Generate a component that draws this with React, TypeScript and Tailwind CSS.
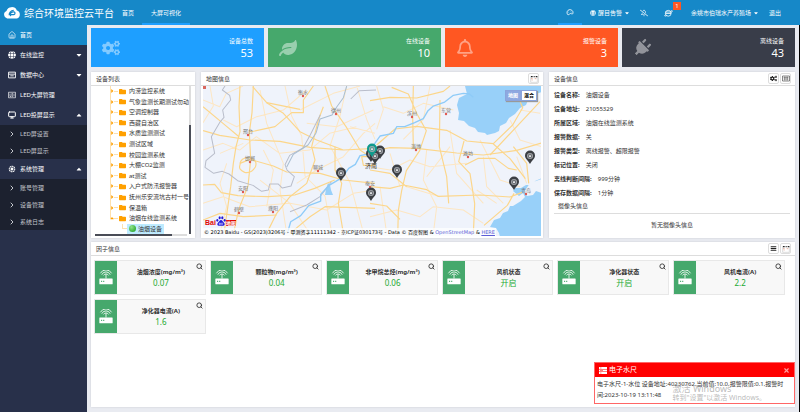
import type { ReactNode } from 'react'
import clsx from 'clsx'
import { FaCaretDown, FaCaretUp, FaCogs, FaFolder, FaGlobe, FaLeaf, FaPlug, FaRegBell, FaRegBellSlash } from 'react-icons/fa'
import { IoAperture } from 'react-icons/io5'
import { LuChevronRight, LuHouse, LuMenu, LuMonitor, LuSearch, LuX } from 'react-icons/lu'

type NavItem = { label: string; icon: ReactNode; active?: boolean; open?: boolean; menu?: boolean; children?: string[] }

const NAV: NavItem[] = [
  { label: '首页', icon: <LuHouse />, active: true },
  { label: '在线监控', icon: <FaGlobe />, menu: true },
  { label: '数据中心', icon: <WindowIcon />, menu: true },
  { label: 'LED大屏管理', icon: <PanelIcon /> },
  { label: 'LED投屏显示', icon: <LuMonitor strokeWidth={3} />, menu: true, open: true, children: ['LED屏设置', 'LED屏显示'] },
  { label: '系统管理', icon: <IoAperture />, menu: true, open: true, children: ['账号管理', '设备管理', '系统日志'] },
]

const STATS = [
  { label: '设备总数', value: 53, color: 'bg-[#1e9fff]', icon: <FaCogs /> },
  { label: '在线设备', value: 10, color: 'bg-[#46a86c]', icon: <FaLeaf /> },
  { label: '报警设备', value: 3, color: 'bg-[#ff5722]', icon: <FaRegBell /> },
  { label: '离线设备', value: 43, color: 'bg-[#393d49]', icon: <FaPlug className="rotate-45" /> },
]

const TREE = [
  '内涝监控系统', '气象监测长期测试勿动', '空调控制器', '西藏自治区', '水质监测测试', '测试区域', '校园监测系统',
  '大棚CO2监测', 'at测试', '入户式防汛报警器', '抚州乐安流坑古村一号', '保温箱', '油烟在线监测系统',
]

const INFO: [string, string][] = [
  ['设备名称', '油烟设备'],
  ['设备地址', '21055329'],
  ['所属区域', '油烟在线监测系统'],
  ['报警数据', '关'],
  ['报警类型', '离线报警、超限报警'],
  ['标记位置', '关闭'],
  ['离线判断间隔', '999分钟'],
  ['保存数据间隔', '1分钟'],
]

const FACTORS: [string, string][] = [
  ['油烟浓度(mg/m³)', '0.07'],
  ['颗粒物(mg/m³)', '0.04'],
  ['非甲烷总烃(mg/m³)', '0.06'],
  ['风机状态', '开启'],
  ['净化器状态', '开启'],
  ['风机电流(A)', '2.2'],
  ['净化器电流(A)', '1.6'],
]

// name, dot x, dot y
const CITIES: [string, number, number][] = [
  ['衡水', 100, 10], ['德州', 133, 28], ['邢台', 45, 49], ['邯郸', 47, 76], ['安阳', 40, 106], ['鹤壁', 36, 127],
  ['濮阳', 70, 126], ['聊城', 115, 85], ['泰安', 167, 101], ['滨州', 209, 31], ['东营', 243, 28], ['淄博', 213, 64],
  ['潍坊', 265, 71], ['青岛', 323, 108],
]

const PINS = [[168, 76], [177, 73], [172, 78], [138, 95], [168, 115], [194, 92], [327, 78], [311, 104]]

function WindowIcon() {
  return (
    <svg viewBox="0 0 14 14" width="1em" height="1em" fill="none" stroke="currentColor" strokeWidth="1.6">
      <path d="M1 2h12v10H1zM1 5.5h12M4 8.5h6" />
    </svg>
  )
}

function PanelIcon() {
  return (
    <svg viewBox="0 0 16 14" width="1em" height="1em" fill="none" stroke="currentColor" strokeWidth="1.3">
      <path d="M1 1.5h14v11H1zM4 4v6h2M8 4v6M7.5 4h2M7.5 7h2M7.5 10h2M12 4v6" />
    </svg>
  )
}

function GridIcon() {
  return (
    <svg viewBox="0 0 16 14" width="8" height="7" fill="none" stroke="#555">
      <path d="M1 2h14v10H1z" strokeWidth="1.4" />
      <path d="M3 5h10M3 8h10M5 3v8M8 3v8M11 3v8" strokeWidth="1" />
    </svg>
  )
}

function LayoutIcon() {
  return (
    <svg viewBox="0 0 24 24" width="8" height="8" fill="none">
      <path d="M2 3v19h20V3" stroke="#bbb" strokeWidth="1.5" />
      <path d="M3 5h5M11 5h3M17 5h5" stroke="#222" strokeWidth="4" />
      <path d="M3 11h5M5 15h3M14 11h5" stroke="#d98f7a" strokeWidth="2" />
    </svg>
  )
}

function GaugeIcon() {
  return (
    <svg viewBox="0 0 24 20" width="8" height="7" fill="none" stroke="currentColor" strokeWidth="2.500">
      <path d="M5 16a9 9 0 1 1 16-5c0 3-2 4-4 3s-5-2-6 0-3 3-6 2z" />
      <path d="M8 9h1M13 6h1M17 9h1" />
    </svg>
  )
}

function BrowserIcon() {
  return (
    <svg viewBox="0 0 18 16" width="9" height="8" fill="none" stroke="currentColor" strokeWidth="1.6">
      <circle cx="8.500" cy="8.500" r="5.800" />
      <path d="M3 9h11M3 6h11M14 4c4-2 3 1 0 3.500M3.500 11C0 14 1 15 5 13.500" />
    </svg>
  )
}

function CloudLogo() {
  return (
    <svg viewBox="0 0 52 36" width="18" height="13">
      <path d="M12 35a11 11 0 0 1-2-21A16 16 0 0 1 40 12a12 12 0 0 1 0 23z" fill="#fff" />
      <path d="M20 24h11c5 0 5-9-2-8-8 1-10 9-6 12M31 12c-9 0-14 8-13 14" fill="none" stroke="#1688c8" strokeWidth="3.500" />
    </svg>
  )
}

function RouterIcon() {
  return (
    <svg viewBox="0 0 40 42" width="14" height="15" fill="none" stroke="#fff" strokeWidth="2.400">
      <path d="M20 12v12M13 15a8 8 0 0 1 14 0M8 13a13 13 0 0 1 24 0M4 9a18 18 0 0 1 32 0" />
      <rect x="1" y="24" width="38" height="16" rx="1.500" fill="#fff" stroke="none" />
      <path d="M6 32h3M12 32h3" stroke="#46a86c" strokeWidth="3" />
    </svg>
  )
}

function Pin({ x, y, color = '#3c3f44' }: { x: number; y: number; color?: string }) {
  return (
    <g transform={`translate(${x} ${y})`}>
      <path d="M0 0C-2-4-5-5-5-8.500a5 5 0 0 1 10 0C5-5 2-4 0 0z" fill={color} />
      <circle cy="-8" r="3" fill="#a9acb0" />
      <circle cy="-8" r="1.800" fill="none" stroke={color} strokeWidth=".6" />
      <path d="M-1-7.500h2M0-9v2" stroke="#fff" strokeWidth=".5" />
    </g>
  )
}

function MapDrawing() {
  return (
    <svg className="block h-full w-full" aria-label="地图">
      <rect width="100%" height="100%" fill="#eff3fb" />
      {/* sea */}
      <path d="M262 0l2 8-8 4-2 7 2 8-1 7 6 1 5 5 6 2 3 4 7 1 2 2 8-2 4-2 1-5 6-3 3-5 6-4 5-6 6-3 3-7 7-4 8-3h60V0z" fill="#98d0f9" />
      <path d="M420 92H339l-7 3-1 4-8 0-5 3-6 0-2 3 6 5 4-3 2 4-4 4-8 5-3 0-2 5-5 2-3 5-6 2-4 7 6 1 3 5 1 4h130z" fill="#98d0f9" />
      <path d="M327 97l12-4v14l-6-2-3 4-6 1-3-4z" fill="#eff3fb" />
      <path d="M125 97l2 2 1 5 2 5-8 0 1-6z" fill="#98d0f9" />

      {/* west side */}
      <g transform="translate(-3 -16) scale(.3334)" fill="none" strokeLinejoin="round">
        <g stroke="#fde6c2" strokeWidth="3">
          <path d="M9 90l50 20 20-40 50-22M70 150l40 20 60-30 80-20 70-60M30 48l10 60-31 50M9 240l60-20 50 20 50-40 70 50 90-10 60-50 80-20M60 250l70-30M180 60l20 100 50 120-10 80 20 130M255 48l20 90 30 60 10 120 60 60 20 110M60 490l20-80-20-70 20-60M300 120l100-50 80-22M320 160l90 10 110-50M290 340l60-40 80-40 60-70 35-30M180 330l90 70 110 20 80-50 65-10M9 400l60-20 80 30 120-10 60 90M440 48l-20 90-30 90 60 110 40 150M470 48l30 100 25 60M190 240l30 60-20 110M450 170l75 20" />
        </g>
        <g stroke="#fcd68a" strokeWidth="3.500">
          <path d="M120 48l-3 62 3 75-12 45-8 50-8 70-20 140M160 48l-4 80-8 60 4 80-8 80-28 70-15 70" />
          <path d="M9 182l50 14 91 14 90 4 90 18 100 8 95-5M158 50l42 48 50 32 50 55 50 25 80 30" />
          <path d="M120 280l30-12 70 20 40 18 100 4 70 20 95 10M9 345l35-2 20 25 50 9 90 3 80-5 60-20 60-25" />
          <path d="M340 48l-30 42 0 38-35 0-50 42-75 16M375 48l20 60 45 65 40 67 30 20M200 98l100 20M370 110l-15 40-20 80 10 40-25 70-50 40-40 50-30 60" />
          <path d="M405 230v70l20 40-10 60 15 90M270 490l60-50 45-30 150 5M9 450l51-20 70 10 100-5M120 285q0-24 30-22 24 8 16 28-12 20-32 16-20-8-14-22M9 110l60 50 48 40M485 260h40v26h-35z" />
        </g>
        <path d="M75 48l-8 12 22 16 3 14-24 30 4 22-12 14-26 44 10 50-26 22-3 20 26 18 26-6 20 8 26 20 46 14 26 18 20-4 4-18 26 0 12 12 26-6 10-28-22-20-6-16 14-28 40-22 22-40 30-60M528 60l-50 2-26 25M270 425l50-20 40-25 34-45" stroke="#b9bdca" strokeWidth="3" />
        <path d="M440 48l-10 35-20 28-14 24-36 12-12 42-24 36-44 28-20 38" stroke="#a8bed1" strokeWidth="3" />
        <path d="M262 490l10-35 30-18 24-30 36-14 0-20 24-26 40-24 20-28 20-12 14-26 32-6" stroke="#8ecbf8" strokeWidth="4" />
      </g>

      {/* east side */}
      <g transform="translate(167 -16) scale(.3334)" fill="none" strokeLinejoin="round">
        <g stroke="#fde6c2" strokeWidth="3">
          <path d="M20 48l20 70-20 60M40 110l60 20 60-30 90 20M180 48l-20 100-60 60M0 290l60 10 60-30 60 20 110-10M60 250l30 100M170 240l-10 90 40 80-10 80M340 260l10 90 50 50M240 180l20 130 80 90M0 440l80-20 70 20 40-30 90 10 60 40M110 350l100 30M420 150l30 60 65 20M330 210l60 120 60 20M450 120l60 10M440 260l30 80M240 230l-70 90M30 350l20 140M380 400l-60-40" />
        </g>
        <g stroke="#fcd68a" strokeWidth="3.500">
          <path d="M0 92l60-10 80 2 80-20 20-16M130 48l-2 90 2 95M65 52l50 20 26 60 28 50-20 60-40 60-14 60-10 60-2 82" />
          <path d="M0 245l60-12 80 2 120 14 80 6 100-14 75-22M20 225l55-48 65-8 90 12 60 32 80 8 58-56 30-52-12-28" />
          <path d="M210 90l-2 140 22 90 6 80M282 213l-16 62 34 36 14 90-4 90M370 222l50 44 46 60M285 285l40-20 50 0 40 30 25 5" />
          <path d="M0 350l60 5 40-10 70 14 34 20 126-4 90 6 36-14M432 370l-20 36-70 60M360 255l150-160M0 400l50 8 40 40M0 300l60 10 50 40M430 230l40 50 6 60" />
        </g>
        <path d="M0 240l30-42 40-8 10-20 24 0 30-12 26-12 14-24 16-14 34-12 26-20 30-6 18 2 12 10" stroke="#8ecbf8" strokeWidth="4" />
      </g>

      <rect x="0" y="0" width="3" height="3" fill="#d9675f" />
      {CITIES.map(([name, x, y]) => (
        <g key={name}>
          <circle cx={x} cy={y} r="1.200" fill="#e0574f" />
          <text x={x} y={y - 2} textAnchor="middle" className="fill-[#777] text-[5px]">{name}</text>
        </g>
      ))}
      <text x="168" y="82" textAnchor="middle" className="fill-[#333] text-[6px]">济南</text>
      {PINS.map(([x, y]) => <Pin key={`${x}-${y}`} x={x} y={y} />)}
      <Pin x={169} y={71} color="#0f9a8c" />
    </svg>
  )
}

function BaiduLogo() {
  return (
    <div className="flex items-end font-['Liberation_Sans'] text-[7px] leading-[7px] font-bold text-[#e10602]">
      Bai
      <svg viewBox="0 0 30 30" width="10" height="10" fill="#2319dc">
        <ellipse cx="4" cy="13" rx="3" ry="4" />
        <ellipse cx="11" cy="5" rx="3.200" ry="4.500" />
        <ellipse cx="19" cy="5" rx="3.200" ry="4.500" />
        <ellipse cx="26" cy="13" rx="3" ry="4" />
        <path d="M15 12c4 0 5 5 9 8s2 9-3 9H9c-5 0-7-6-3-9s5-8 9-8z" />
        <path d="M10 21h3v5h-3zM16 20v5h4v-5" fill="none" stroke="#fff" strokeWidth="1.500" />
      </svg>
      <span className="bg-[#e10602] font-['Noto_Sans_CJK_SC'] text-[5px] leading-[6px] text-white">地图</span>
    </div>
  )
}

function IconButton({ label, children }: { label: string; children: ReactNode }) {
  return (
    <button aria-label={label} className="flex h-[11px] w-[11px] items-center justify-center rounded-xs border border-[#ddd] bg-white text-[7px] text-[#222]">
      {children}
    </button>
  )
}

function Panel({ title, actions, className, children }: { title: string; actions?: ReactNode; className?: string; children: ReactNode }) {
  return (
    <section className={clsx('flex min-w-0 flex-col bg-white shadow-[0_0_2px_rgba(0,0,0,0.12)]', className)}>
      <header className="flex h-[14px] shrink-0 items-center justify-between border-b border-[#ddd] pr-1 pl-[5px]">
        <h2>{title}</h2>
        <div className="flex gap-px">{actions}</div>
      </header>
      {children}
    </section>
  )
}

function TopBar() {
  return (
    <header className="flex h-[25px] shrink-0 items-center bg-[#1688c8] text-white">
      <div className="flex items-center gap-[3px] pl-[3px]">
        <CloudLogo />
        <h1 className="text-[10px] whitespace-nowrap">综合环境监控云平台</h1>
      </div>
      <nav className="flex h-full">
        <a href="#home" className="flex items-center px-2">首页</a>
        <a href="#screen" className="flex items-center border-b-2 border-[#1e9fff] px-[9px] pt-[2px]">大屏可视化</a>
      </nav>
      <div className="ml-auto flex h-full items-center pr-[19px]">
        <button aria-label="主题" className="flex h-full w-6 items-center justify-center border-b-2 border-[#1e9fff] pt-[2px]"><GaugeIcon /></button>
        <button className="ml-2 flex items-center gap-[2px]"><FaGlobe />醒目告警<FaCaretDown /></button>
        <button aria-label="静音" className="ml-[10px] text-[8px]"><FaRegBellSlash /></button>
        <button aria-label="消息" className="relative ml-4">
          <BrowserIcon />
          <span className="absolute -top-[7px] left-[9px] h-2 w-2 bg-[#ff5722] text-[6px] leading-2">1</span>
        </button>
        <button className="ml-[18px] flex items-center gap-[2px]">余姚市伯瑞水产养殖场<FaCaretDown /></button>
        <a href="#logout" className="ml-[10px]">退出</a>
      </div>
    </header>
  )
}

function Sidebar() {
  return (
    <nav className="w-[87px] shrink-0 bg-[#28304a] text-white">
      {NAV.map(item => (
        <div key={item.label}>
          <a href="#nav" className={clsx('flex h-5 items-center gap-1 pr-1 pl-2', item.active && 'bg-[#1688c8]')}>
            <span className="text-[8px]">{item.icon}</span>
            <span className="flex-1">{item.label}</span>
            {item.menu && (item.open ? <FaCaretUp className="text-[8px]" /> : <FaCaretDown className="text-[8px]" />)}
          </a>
          {item.children && (
            <div className="bg-[#1c212f] text-[#c3c6cc]">
              {item.children.map(c => (
                <a key={c} href="#nav" className="flex h-[17px] items-center gap-1 pl-2">
                  <LuChevronRight className="text-[8px]" strokeWidth={3} />
                  {c}
                </a>
              ))}
            </div>
          )}
        </div>
      ))}
    </nav>
  )
}

function DeviceTree() {
  return (
    <>
      <div className="flex min-h-0 flex-1 pr-1 pl-[19px]">
        <ul className="relative flex min-w-0 flex-1 flex-col justify-between overflow-hidden whitespace-nowrap">
          <li aria-hidden className="absolute top-0 bottom-4 left-0 w-px bg-[#fde0ae]" />
          {TREE.map((name, i) => (
            <li key={name} className="flex h-[10px] items-center">
              {i === TREE.length - 1 ? <FaCaretUp className="w-1 shrink-0 text-[#ffa000]" /> : <FaCaretDown className="w-1 shrink-0 -rotate-90 text-[#ffa000]" />}
              <span className="h-px w-1 shrink-0 bg-[#fde0ae]" />
              <FaFolder className="mr-[3px] ml-px shrink-0 text-[7px] text-[#ffa000]" />
              {name}
            </li>
          ))}
          <li className="flex h-[10px] items-center pl-3">
            <span className="mb-1 h-[5px] w-[5px] border-b border-l border-[#fde0ae]" />
            <span className="flex h-[10px] items-center gap-[2px] bg-[#beebff] px-[2px]">
              <span className="h-[7px] w-[7px] rounded-full bg-radial-[at_35%_30%] from-[#8fe38a] to-[#159a1c]" />
              油烟设备
            </span>
          </li>
        </ul>
        <div className="flex w-[2px] flex-col bg-[#ddd] pt-[39px]">
          <div className="flex-1 bg-[#4a4d57]" />
        </div>
      </div>
      <div className="mr-2 mb-[2px] ml-1 h-[2px] bg-[#ddd]">
        <div className="h-full w-5/6 bg-[#4a4d57]" />
      </div>
    </>
  )
}

function MapPanel() {
  return (
    <Panel title="地图信息" actions={<IconButton label="布局"><LayoutIcon /></IconButton>}>
      <div className="relative mx-[2px] mb-[2px] min-h-0 flex-1 overflow-hidden">
        <MapDrawing />
        <div className="absolute top-1 right-1 flex text-[5px] leading-[9px] font-bold shadow-[1px_1px_1px_#999]">
          <button className="w-4 border border-[#8ba4dc] bg-[#8ea8e0] text-white">地图</button>
          <button className="w-4 border border-[#8ba4dc] bg-white text-black">混合</button>
        </div>
        <div className="absolute bottom-[10px] left-[2px]"><BaiduLogo /></div>
        <p className="absolute bottom-0 left-0 bg-white/70 px-px font-['DejaVu_Sans','Noto_Sans_CJK_SC',sans-serif] text-[5px] leading-2 whitespace-nowrap text-black">
          © 2023 Baidu - GS(2023)3206号 - 甲测资字11111342 - 京ICP证030173号 - Data © 百度智图 &amp;{' '}
          <a href="#osm" className="text-[#5c5cd6]">OpenStreetMap</a> &amp; <a href="#here" className="text-[#5c5cd6] underline">HERE</a>
        </p>
      </div>
    </Panel>
  )
}

function InfoPanel() {
  return (
    <Panel
      title="设备信息"
      actions={<><IconButton label="设置"><FaCogs /></IconButton><IconButton label="表格"><GridIcon /></IconButton></>}
    >
      <dl className="px-[5px] pt-[2px] leading-[14px]">
        {INFO.map(([k, v]) => (
          <div key={k} className="flex gap-[6px]">
            <dt className="font-bold">{k}:</dt>
            <dd>{v}</dd>
          </div>
        ))}
      </dl>
      <h3 className="mx-[5px] border-b border-[#ddd] pl-1 leading-[13px]">摄像头信息</h3>
      <p className="pt-1 text-center leading-[14px]">暂无摄像头信息</p>
    </Panel>
  )
}

function FactorCard({ name, value }: { name: string; value: string }) {
  return (
    <article className="relative flex h-[35px] border border-[#e8e8e8] bg-[#f8f8f8]">
      <div className="flex w-[22px] shrink-0 items-center justify-center bg-[#46a86c]"><RouterIcon /></div>
      <div className="flex flex-1 flex-col items-center justify-center">
        <h3 className="leading-[10px] font-bold">{name}</h3>
        <p className="text-[8px] leading-[11px] text-[#22a932]">{value}</p>
      </div>
      <button aria-label="查看" className="absolute top-[2px] right-[2px] text-[7px]"><LuSearch strokeWidth={3} /></button>
    </article>
  )
}

function Toast() {
  return (
    <aside className="absolute right-1 bottom-2 w-[201px] border border-[#f66] bg-white">
      <header className="flex h-[14px] items-center gap-[2px] bg-[#f00] px-1 text-[7px] text-white">
        <svg viewBox="0 0 16 14" width="8" height="7" fill="#fff">
          <path d="M0 0h16v4H0zM0 5h16v4H0zM0 10h16v4H0z" />
          <path d="M2 2h3M2 7h6M2 12h3" stroke="#f00" />
        </svg>
        <span className="flex-1">电子水尺</span>
        <button aria-label="关闭" className="text-[#ff9c9c]"><LuX strokeWidth={4} /></button>
      </header>
      <p className="h-[26px] px-[2px] pt-[2px] leading-[11px] whitespace-nowrap">
        电子水尺-1-水位 设备地址:40230762,当前值:10.0,报警限值:0.1,报警时<br />间:2023-10-19 13:11:48
      </p>
      <div className="absolute right-7 bottom-0 text-[#aaa]/80">
        <p className="text-[9px] leading-[9px]">激活 Windows</p>
        <p className="text-[7px] leading-[10px]">转到"设置"以激活 Windows。</p>
      </div>
    </aside>
  )
}

export default function App() {
  return (
    <div className="flex min-h-screen flex-col font-['Noto_Sans','Noto_Sans_CJK_SC',sans-serif] text-[6px] leading-[10px] text-[#333]">
      <TopBar />
      <div className="flex flex-1">
        <Sidebar />
        <main className="relative flex min-w-0 flex-1 flex-col gap-[5px] border-r border-black bg-[#e9ebf1] pt-[3px] pr-1 pb-[5px] pl-1">
          <div className="grid grid-cols-4 gap-1">
            {STATS.map(s => (
              <div key={s.label} className={clsx('flex h-[39px] items-center justify-between px-[11px] text-white', s.color)}>
                <span className="text-[18px] text-white/45">{s.icon}</span>
                <p className="text-right">
                  <span className="block leading-[9px]">{s.label}</span>
                  <span className="block text-[11px] leading-[13px]">{s.value}</span>
                </p>
              </div>
            ))}
          </div>
          <div className="grid h-[165px] grid-cols-[104px_minmax(0,1fr)_246px] gap-[6px]">
            <Panel title="设备列表"><DeviceTree /></Panel>
            <MapPanel />
            <InfoPanel />
          </div>
          <Panel
            title="因子信息"
            className="flex-1"
            actions={<><IconButton label="列表"><LuMenu strokeWidth={4} /></IconButton><IconButton label="布局"><LayoutIcon /></IconButton></>}
          >
            <div className="grid grid-cols-6 gap-1 pt-1 pr-[10px] pl-[3px]">
              {FACTORS.map(([name, value]) => <FactorCard key={name} name={name} value={value} />)}
            </div>
          </Panel>
          <Toast />
        </main>
      </div>
    </div>
  )
}
